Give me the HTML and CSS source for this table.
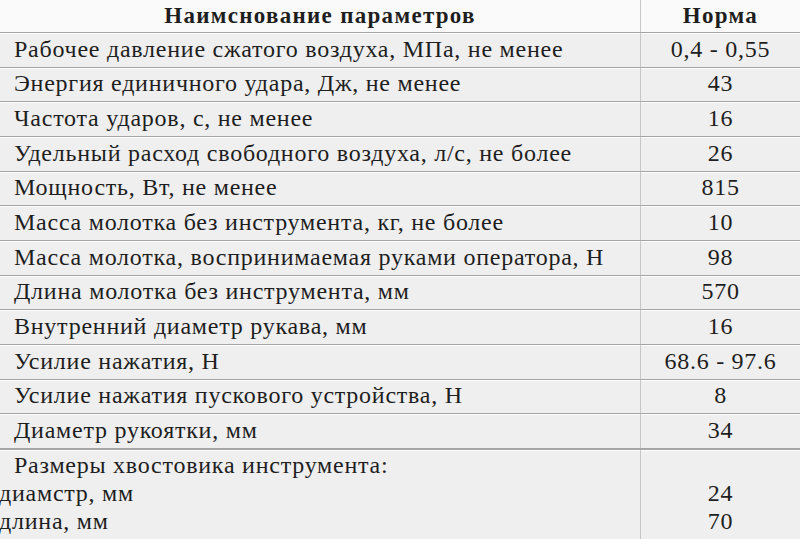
FILE: index.html
```html
<!DOCTYPE html>
<html lang="ru">
<head>
<meta charset="utf-8">
<link rel="stylesheet" href="styles.css">
</head>
<body>
<div class="spec">
  <div class="row head">
    <div class="cell name">Наимснование параметров</div>
    <div class="cell val">Норма</div>
  </div>
  <div class="row"><div class="cell name">Рабочее давление сжатого воздуха, МПа, не менее</div><div class="cell val">0,4 - 0,55</div></div>
  <div class="row"><div class="cell name">Энергия единичного удара, Дж, не менее</div><div class="cell val">43</div></div>
  <div class="row"><div class="cell name">Частота ударов, с, не менее</div><div class="cell val">16</div></div>
  <div class="row"><div class="cell name">Удельный расход свободного воздуха, л/с, не более</div><div class="cell val">26</div></div>
  <div class="row"><div class="cell name">Мощность, Вт, не менее</div><div class="cell val">815</div></div>
  <div class="row"><div class="cell name">Масса молотка без инструмента, кг, не более</div><div class="cell val">10</div></div>
  <div class="row"><div class="cell name">Масса молотка, воспринимаемая руками оператора, Н</div><div class="cell val">98</div></div>
  <div class="row"><div class="cell name">Длина молотка без инструмента, мм</div><div class="cell val">570</div></div>
  <div class="row"><div class="cell name">Внутренний диаметр рукава, мм</div><div class="cell val">16</div></div>
  <div class="row"><div class="cell name">Усилие нажатия, Н</div><div class="cell val">68.6 - 97.6</div></div>
  <div class="row"><div class="cell name">Усилие нажатия пускового устройства, Н</div><div class="cell val">8</div></div>
  <div class="row"><div class="cell name">Диаметр рукоятки, мм</div><div class="cell val">34</div></div>
  <div class="row last">
    <div class="cell name">
      <div class="line">Размеры хвостовика инструмента:</div>
      <div class="line sub">диамстр, мм</div>
      <div class="line sub">длина, мм</div>
    </div>
    <div class="cell val">
      <div class="line"></div>
      <div class="line">24</div>
      <div class="line">70</div>
    </div>
  </div>
</div>
</body>
</html>
```
FILE: styles.css
```css
html, body {
  margin: 0;
  padding: 0;
  background: #efefef;
  overflow: hidden;
}
.spec {
  width: 800px;
  height: 539px;
  display: flex;
  flex-direction: column;
  font-family: "Liberation Serif", "Times New Roman", serif;
  font-size: 24px;
  letter-spacing: 0.75px;
  color: #1e1e1e;
}
.row {
  display: grid;
  grid-template-columns: 641px 159px;
  height: 34.67px;
  box-sizing: border-box;
  border-top: 1px solid #a5a5a5;
  box-shadow: inset 0 1px 0 #ffffff;
  flex: none;
}
.cell {
  display: flex;
  align-items: center;
  white-space: nowrap;
  line-height: 1;
  padding-bottom: 2px;
}
.cell.name {
  padding-left: 14px;
  border-right: 1px solid #c6c6c6;
}
.cell.val {
  justify-content: center;
}
.row.head {
  height: 32px;
  border-top: none;
  box-shadow: none;
  background: #fafafa;
  font-weight: bold;
  font-size: 23px;
  letter-spacing: 1.3px;
}
.row.head .cell.name {
  padding-left: 0;
  justify-content: center;
}
.row.last {
  flex: 1;
  height: auto;
  border-top: 2px solid #a5a5a5;
}
.row.last .cell {
  flex-direction: column;
  align-items: flex-start;
  justify-content: flex-start;
  padding-top: 1px;
  padding-bottom: 0;
}
.row.last .cell.val {
  align-items: center;
}
.line {
  height: 28px;
  line-height: 28px;
}
.sub {
  margin-left: -15px;
}
```
